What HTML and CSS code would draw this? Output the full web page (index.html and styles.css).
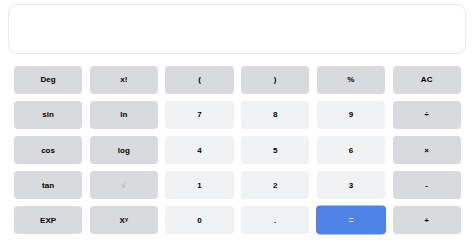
FILE: index.html
```html
<!DOCTYPE html>
<html>
  <head>
    <title>Calculator</title>
    <link rel="stylesheet" href="styles.css">
  </head>
  <body>
    <div class="calc">
      <div class="display"></div>
      <div class="keys">
        <button class="key fn">Deg</button>
        <button class="key fn">x!</button>
        <button class="key fn">(</button>
        <button class="key fn">)</button>
        <button class="key fn">%</button>
        <button class="key fn">AC</button>

        <button class="key fn">sin</button>
        <button class="key fn">ln</button>
        <button class="key num">7</button>
        <button class="key num">8</button>
        <button class="key num">9</button>
        <button class="key fn">÷</button>

        <button class="key fn">cos</button>
        <button class="key fn">log</button>
        <button class="key num">4</button>
        <button class="key num">5</button>
        <button class="key num">6</button>
        <button class="key fn">×</button>

        <button class="key fn">tan</button>
        <button class="key fn dim">√</button>
        <button class="key num">1</button>
        <button class="key num">2</button>
        <button class="key num">3</button>
        <button class="key fn">-</button>

        <button class="key fn">EXP</button>
        <button class="key fn">X<sup>y</sup></button>
        <button class="key num">0</button>
        <button class="key num">.</button>
        <button class="key eq">=</button>
        <button class="key fn">+</button>
      </div>
    </div>
  </body>
</html>
```

FILE: styles.css
```css
body {
  margin: 0;
  background-color: #fff;
  font-family: "Liberation Sans", Arial, sans-serif;
}

.calc {
  padding: 4px 8px;
}

.display {
  height: 48px;
  border: 1px solid #e6e7ea;
  border-radius: 9px;
  background-color: #fff;
}

.keys {
  display: grid;
  grid-template-columns: repeat(6, 1fr);
  grid-auto-rows: 28px;
  column-gap: 7.6px;
  row-gap: 7.2px;
  padding: 11.7px 5.3px 0 6px;
}

.key {
  border: none;
  border-radius: 4px;
  margin: 0;
  padding: 0;
  font-family: inherit;
  font-size: 8px;
  font-weight: bold;
  color: #000;
  display: flex;
  align-items: center;
  justify-content: center;
}

.key sup {
  font-size: 5.5px;
  line-height: 0;
  position: relative;
  top: -1px;
}

.fn {
  background-color: #d9dadd;
}

.num {
  background-color: #f1f2f4;
}

.dim {
  color: #a3a5aa;
  font-weight: normal;
}

.eq {
  background-color: #5083e6;
  color: #dfe8fb;
  transform: scale(1.03);
}
```
